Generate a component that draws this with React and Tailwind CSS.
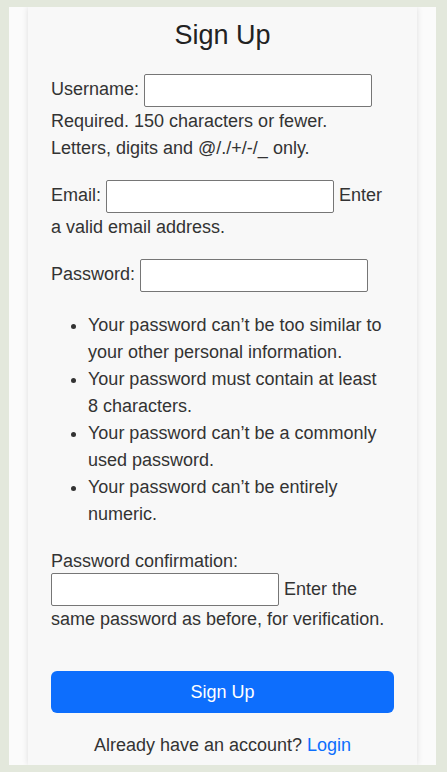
export default function App() {
  const font = { fontFamily: '"Liberation Sans", Arial, sans-serif' };
  return (
    <div className="min-h-[772px] bg-[#e3e8dc] pt-[7px] px-[9px] pb-[7px] text-[#333]" style={font}>
      <div className="w-[427px] bg-[#fbfbfb] px-[19px] h-[758px] overflow-hidden">
        <div className="bg-[#f8f8f8] h-full px-[23px] pt-[12px] shadow-[0_0_6px_rgba(0,0,0,0.12)] text-[18px] leading-[27px]">
          <h2 className="text-[27px] leading-[32px] text-center text-[#222] mb-[22px]">Sign Up</h2>
          <form>
            <p className="mb-[17px] pr-[4px]">
              <label>Username:</label>{" "}
              <input type="text" className="w-[228px] h-[33px] my-[1px] align-middle bg-white border border-[#767676] rounded-[2px]" />{" "}
              <span>Required. 150 characters or fewer. Letters, digits and @/./+/-/_ only.</span>
            </p>
            <p className="mb-[17px] pr-[4px]">
              <label>Email:</label>{" "}
              <input type="email" className="w-[228px] h-[33px] my-[1px] align-middle bg-white border border-[#767676] rounded-[2px]" />{" "}
              <span>Enter a valid email address.</span>
            </p>
            <p className="mb-[19px] pr-[4px]">
              <label>Password:</label>{" "}
              <input type="password" className="w-[228px] h-[33px] my-[1px] align-middle bg-white border border-[#767676] rounded-[2px]" />
            </p>
            <ul className="list-disc pl-[37px] pr-[4px] mb-[20px]">
              <li>Your password can’t be too similar to your other personal information.</li>
              <li>Your password must contain at least 8 characters.</li>
              <li>Your password can’t be a commonly used password.</li>
              <li>Your password can’t be entirely numeric.</li>
            </ul>
            <p className="mb-[16px] pr-[4px]">
              <label>Password confirmation:</label>{" "}
              <input type="password" className="w-[228px] h-[33px] -mt-[2px] align-middle bg-white border border-[#767676] rounded-[2px]" />{" "}
              <span>Enter the same password as before, for verification.</span>
            </p>
            <button type="button" className="mt-[22px] w-full h-[42px] rounded-[6px] bg-[#0d6efd] text-white text-[18px]">Sign Up</button>
          </form>
          <p className="text-center mt-[19px]">
            Already have an account? <a className="text-[#0d6efd]" href="#">Login</a>
          </p>
        </div>
      </div>
    </div>
  );
}
